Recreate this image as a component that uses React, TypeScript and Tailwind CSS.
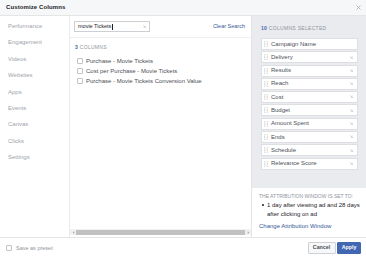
import React from "react";

const navItems = [
  "Performance",
  "Engagement",
  "Videos",
  "Websites",
  "Apps",
  "Events",
  "Canvas",
  "Clicks",
  "Settings",
];

const results = [
  "Purchase - Movie Tickets",
  "Cost per Purchase - Movie Tickets",
  "Purchase - Movie Tickets Conversion Value",
];

const selected = [
  "Campaign Name",
  "Delivery",
  "Results",
  "Reach",
  "Cost",
  "Budget",
  "Amount Spent",
  "Ends",
  "Schedule",
  "Relevance Score",
];

const CloseIcon = ({ size = 4, color = "#90949c" }: { size?: number; color?: string }) => (
  <svg width={size} height={size} viewBox="0 0 10 10" className="shrink-0">
    <path d="M1 1L9 9M9 1L1 9" stroke={color} strokeWidth="1.4" />
  </svg>
);

const DragHandle = () => (
  <svg width="4" height="6" viewBox="0 0 4 6" className="shrink-0">
    {[0.75, 2.25, 3.75, 5.25].map((y) =>
      [0.75, 3.25].map((x) => (
        <rect key={`${x}-${y}`} x={x - 0.5} y={y - 0.5} width="1" height="1" fill="#c4c7cc" />
      ))
    )}
  </svg>
);

const Checkbox = () => (
  <span className="inline-block w-[6px] h-[6px] shrink-0 rounded-[1px] border border-[#bec3c9] bg-white" />
);

export default function App() {
  return (
    <div className="w-[366px] h-[258px] flex flex-col bg-white overflow-hidden font-['Liberation_Sans',Arial,sans-serif] text-[#4b4f56]">
      {/* header */}
      <div className="h-[16px] shrink-0 flex items-center justify-between pl-[6px] pr-[5px] bg-[#f6f7f9] border-b border-[#e5e5e5]">
        <span className="text-[6px] font-bold text-[#1d2129] tracking-[0.1px]">Customize Columns</span>
        <CloseIcon size={5} color="#a0a4ab" />
      </div>

      {/* body */}
      <div className="flex flex-1 min-h-0">
        {/* sidebar */}
        <div className="w-[70px] shrink-0 border-r border-[#e9ebee] pt-[2px] pl-[8px]">
          {navItems.map((item) => (
            <div key={item} className="text-[6px] leading-[16.4px] text-[#a0a4ab]">
              {item}
            </div>
          ))}
        </div>

        {/* middle */}
        <div className="w-[181px] shrink-0 flex flex-col">
          <div className="h-[22px] shrink-0 flex items-start justify-between pl-[4px] pr-[6px] pt-[5px] border-b border-[#eceef1]">
            <div className="w-[76px] h-[11px] flex items-center justify-between border border-[#ccd0d5] px-[3px]">
              <span className="flex items-center text-[5.5px] text-[#1d2129]">
                movie Tickets
                <span className="inline-block w-[0.5px] h-[6px] bg-[#1d2129] ml-[0.5px]" />
              </span>
              <CloseIcon size={3.5} color="#a0a4ab" />
            </div>
            <span className="text-[5.5px] leading-[11px] text-[#365899]">Clear Search</span>
          </div>

          <div className="flex-1 pl-[5px] pt-[5px]">
            <div className="text-[5px] leading-[8px] tracking-[0.3px] text-[#90949c]">
              <span className="text-[#4267b2] font-bold">3</span> COLUMNS
            </div>
            <div className="mt-[5px] pl-[2px]">
              {results.map((r) => (
                <div key={r} className="h-[10px] flex items-center gap-[3px]">
                  <Checkbox />
                  <span className="text-[6px] whitespace-nowrap">{r}</span>
                </div>
              ))}
            </div>
          </div>

          {/* horizontal scrollbar */}
          <div className="h-[6px] shrink-0 mb-[2px] flex items-stretch bg-[#f1f1f1]">
            <div className="w-[6px] flex items-center justify-center">
              <svg width="3" height="3" viewBox="0 0 4 4">
                <path d="M3 0L1 2L3 4Z" fill="#a3a3a3" />
              </svg>
            </div>
            <div className="flex-1 bg-[#c1c1c1] my-[0.5px]" />
            <div className="w-[6px] flex items-center justify-center">
              <svg width="3" height="3" viewBox="0 0 4 4">
                <path d="M1 0L3 2L1 4Z" fill="#a3a3a3" />
              </svg>
            </div>
          </div>
        </div>

        {/* right panel */}
        <div className="flex-1 flex flex-col border-l border-[#e5e5e5]">
          <div className="flex-1 bg-[#e9ebee] pl-[9px] pr-[8px] pt-[8px]">
            <div className="text-[5px] leading-[8px] tracking-[0.3px] text-[#90949c]">
              <span className="text-[#4267b2] font-bold">10</span> COLUMNS SELECTED
            </div>
            <div className="mt-[6px] flex flex-col gap-[1.3px]">
              {selected.map((s, i) => (
                <div
                  key={s}
                  className="h-[12px] flex items-center bg-white border border-[#dddfe2] pl-[2px] pr-[4px]"
                >
                  <DragHandle />
                  <span className="ml-[3px] flex-1 text-[6px] whitespace-nowrap">{s}</span>
                  {i > 0 && <CloseIcon size={3.5} color="#a0a4ab" />}
                </div>
              ))}
            </div>
          </div>

          <div className="h-[49px] shrink-0 pl-[7px] pr-[4px] pt-[4px]">
            <div className="text-[5px] leading-[8px] text-[#90949c] whitespace-nowrap">
              THE ATTRIBUTION WINDOW IS SET TO:
            </div>
            <div className="flex mt-[0.5px]">
              <span className="w-[8px] shrink-0 flex justify-center pt-[3.5px]">
                <span className="w-[1.5px] h-[1.5px] rounded-full bg-[#1d2129]" />
              </span>
              <span className="text-[6px] leading-[9px] text-[#1d2129]">
                1 day after viewing ad and 28 days after clicking on ad
              </span>
            </div>
            <div className="mt-[3.5px] text-[6px] leading-[9px] text-[#365899]">
              Change Attribution Window
            </div>
          </div>
        </div>
      </div>

      {/* footer */}
      <div className="h-[21px] shrink-0 flex items-center justify-between pl-[6px] pr-[5px] border-t border-[#e5e5e5]">
        <div className="flex items-center gap-[4px]">
          <Checkbox />
          <span className="text-[5.5px] text-[#90949c]">Save as preset</span>
        </div>
        <div className="flex items-center gap-[1.5px]">
          <button className="w-[28px] h-[11.5px] flex items-center justify-center rounded-[1px] border border-[#ced0d4] bg-[#f6f7f9] text-[5.3px] font-bold text-[#4b4f56]">
            Cancel
          </button>
          <button className="w-[24px] h-[11.5px] flex items-center justify-center rounded-[1px] border border-[#4267b2] bg-[#4267b2] text-[5.3px] font-bold text-white">
            Apply
          </button>
        </div>
      </div>
    </div>
  );
}
